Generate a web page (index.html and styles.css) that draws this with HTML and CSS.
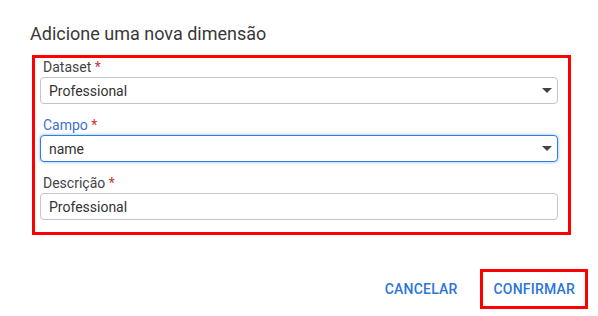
FILE: index.html
```html
<!DOCTYPE html>
<html lang="pt-BR">
<head>
    <meta charset="utf-8">
    <link rel="stylesheet" href="styles.css">
</head>
<body>
    <div class="dialog">
        <h2 class="dialogTitle">Adicione uma nova dimensão</h2>
        <div class="formArea">
            <div class="myRow">
                <label for="dataset">Dataset <span class="req">*</span></label>
                <div class="selectWrap">
                    <select id="dataset">
                        <option>Professional</option>
                    </select>
                </div>
            </div>
            <div class="myRow">
                <label for="campo" class="focused">Campo <span class="req">*</span></label>
                <div class="selectWrap">
                    <select id="campo" class="active">
                        <option>name</option>
                    </select>
                </div>
            </div>
            <div class="myRow">
                <label for="descricao">Descrição <span class="req">*</span></label>
                <input type="text" id="descricao" value="Professional">
            </div>
        </div>
        <div class="actions">
            <button class="btn">Cancelar</button>
            <button class="btn marked">Confirmar</button>
        </div>
    </div>
</body>
</html>
```

FILE: styles.css
```css
body{
    margin: 0;
    background: #fff;
    font-family: Roboto, "Liberation Sans", sans-serif;
    color: #333;
}

.dialog{
    width: 598px;
    height: 316px;
    box-sizing: border-box;
    padding-top: 22px;
}
.dialogTitle{
    margin: 0 0 9px 30px;
    font-size: 18px;
    line-height: 24px;
    font-weight: 400;
    color: #383838;
}

.formArea{
    margin-left: 32px;
    width: 539px;
    box-sizing: border-box;
    border: 3px solid #ff0000;
    padding: 0 10px 12px 5px;
}
.myRow{
    display: flex;
    flex-direction: column;
}
.myRow + .myRow{
    margin-top: 12px;
}
.myRow label{
    font-size: 14px;
    line-height: 19px;
    margin-left: 3px;
    color: #444;
}
.myRow label.focused{
    color: #3f6fd8;
}
.req{
    color: #d32f2f;
}

.selectWrap{
    position: relative;
}
.selectWrap::after{
    content: "";
    position: absolute;
    right: 6px;
    top: 11px;
    border-left: 5px solid transparent;
    border-right: 5px solid transparent;
    border-top: 5px solid #444;
}
select, input{
    display: block;
    width: 100%;
    height: 27px;
    box-sizing: border-box;
    margin: 0;
    padding: 0 8px;
    border: 1px solid #c4c4c4;
    border-radius: 4px;
    background: #fff;
    font-family: Roboto, "Liberation Sans", sans-serif;
    font-size: 14px;
    color: #333;
    appearance: none;
    -webkit-appearance: none;
    outline: none;
}
select.active{
    border-color: #2f7de0;
    box-shadow: 0 0 3px 1px rgba(70, 140, 230, 0.35);
}

.actions{
    display: flex;
    justify-content: flex-end;
    align-items: center;
    margin-top: 34px;
    padding-right: 10px;
}
.btn{
    background: none;
    border: 3px solid transparent;
    padding: 0 10px 0 11px;
    height: 40px;
    font-family: Roboto, "Liberation Sans", sans-serif;
    font-size: 14px;
    font-weight: 500;
    text-transform: uppercase;
    color: #2d74d8;
    letter-spacing: 0.2px;
}
.btn + .btn{
    margin-left: 9px;
}
.btn.marked{
    border-color: #ff0000;
}
```
